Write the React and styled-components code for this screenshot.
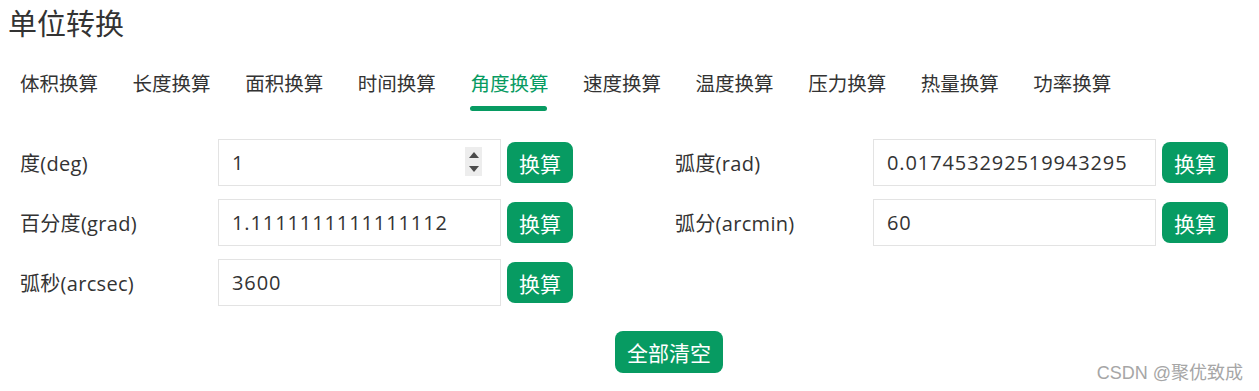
import React from "react";
import styled, { createGlobalStyle, css } from "styled-components";

const green = "#079b62";

const GlobalStyle = createGlobalStyle`
  body {
    margin: 0;
    background: #fff;
    font-family: "Open Sans", "Noto Sans CJK SC", sans-serif;
    color: #333;
  }
`;

const Page = styled.div`
  position: relative;
  width: 1259px;
  height: 391px;
  box-sizing: border-box;
  padding: 4px 0 0 8px;
  overflow: hidden;
`;

const Title = styled.h1`
  margin: 0;
  font-size: 29px;
  line-height: 40px;
  font-weight: 400;
  color: #333;
`;

const TabBar = styled.nav`
  display: flex;
  gap: 35.6px;
  margin-top: 26px;
  padding-left: 12px;
`;

const Tab = styled.div`
  position: relative;
  width: 77px;
  padding-bottom: 13px;
  font-size: 19.5px;
  line-height: 28px;
  white-space: nowrap;
  color: ${(p) => (p.$active ? green : "#333")};

  ${(p) =>
    p.$active &&
    css`
      &::after {
        content: "";
        position: absolute;
        left: 0;
        right: 0;
        bottom: 0;
        height: 5px;
        border-radius: 3px;
        background: ${green};
      }
    `}
`;

const Form = styled.div`
  display: grid;
  grid-template-columns: 553px 553px;
  column-gap: 102px;
  row-gap: 13px;
  margin-top: 28px;
  padding-left: 12px;
`;

const Field = styled.div`
  display: grid;
  grid-template-columns: 198px 283px 72px;
  align-items: center;
`;

const Label = styled.label`
  font-size: 20px;
  letter-spacing: 0.3px;
  color: #333;
  white-space: nowrap;
`;

const InputWrap = styled.div`
  position: relative;
`;

const Input = styled.input`
  display: block;
  width: 283px;
  height: 47px;
  box-sizing: border-box;
  border: 1px solid #e3e3e3;
  padding: 0 ${(p) => (p.$spin ? "40px" : "14px")} 0 13px;
  font-family: inherit;
  font-size: 20px;
  letter-spacing: 0.9px;
  color: #333;
  background: #fff;
  outline: none;
`;

const Spinner = styled.div`
  position: absolute;
  right: 19px;
  top: 8px;
  width: 17px;
  height: 29px;
  background: #ededed;
  display: flex;
  flex-direction: column;
  align-items: center;
  justify-content: center;
  gap: 8px;
`;

const Arrow = styled.span`
  width: 0;
  height: 0;
  border-left: 5px solid transparent;
  border-right: 5px solid transparent;
  ${(p) =>
    p.$down
      ? css`border-top: 6px solid #4a4a4a;`
      : css`border-bottom: 6px solid #4a4a4a;`}
`;

const GreenButton = styled.button`
  justify-self: end;
  height: ${(p) => (p.$wide ? "42px" : "41px")};
  width: ${(p) => (p.$wide ? "108px" : "66px")};
  border: none;
  border-radius: 8px;
  background: ${green};
  color: #fff;
  font-family: inherit;
  font-size: 21px;
  padding: 0;
  cursor: pointer;
`;

const Footer = styled.div`
  display: flex;
  margin-top: 25px;
  padding-left: 607px;
`;

const Watermark = styled.div`
  position: absolute;
  right: 16px;
  bottom: 7px;
  font-family: "Liberation Sans", "Noto Sans CJK SC", sans-serif;
  font-size: 18px;
  color: #a6a6a6;
`;

const tabs = [
  "体积换算",
  "长度换算",
  "面积换算",
  "时间换算",
  "角度换算",
  "速度换算",
  "温度换算",
  "压力换算",
  "热量换算",
  "功率换算",
];

const fields = [
  { label: "度(deg)", value: "1", spin: true },
  { label: "弧度(rad)", value: "0.017453292519943295" },
  { label: "百分度(grad)", value: "1.1111111111111112" },
  { label: "弧分(arcmin)", value: "60" },
  { label: "弧秒(arcsec)", value: "3600" },
];

export default function App() {
  return (
    <Page>
      <GlobalStyle />
      <Title>单位转换</Title>
      <TabBar>
        {tabs.map((t) => (
          <Tab key={t} $active={t === "角度换算"}>
            {t}
          </Tab>
        ))}
      </TabBar>
      <Form>
        {fields.map((f) => (
          <Field key={f.label}>
            <Label>{f.label}</Label>
            <InputWrap>
              <Input defaultValue={f.value} $spin={f.spin} />
              {f.spin && (
                <Spinner>
                  <Arrow />
                  <Arrow $down />
                </Spinner>
              )}
            </InputWrap>
            <GreenButton>换算</GreenButton>
          </Field>
        ))}
      </Form>
      <Footer>
        <GreenButton $wide>全部清空</GreenButton>
      </Footer>
      <Watermark>CSDN @聚优致成</Watermark>
    </Page>
  );
}
